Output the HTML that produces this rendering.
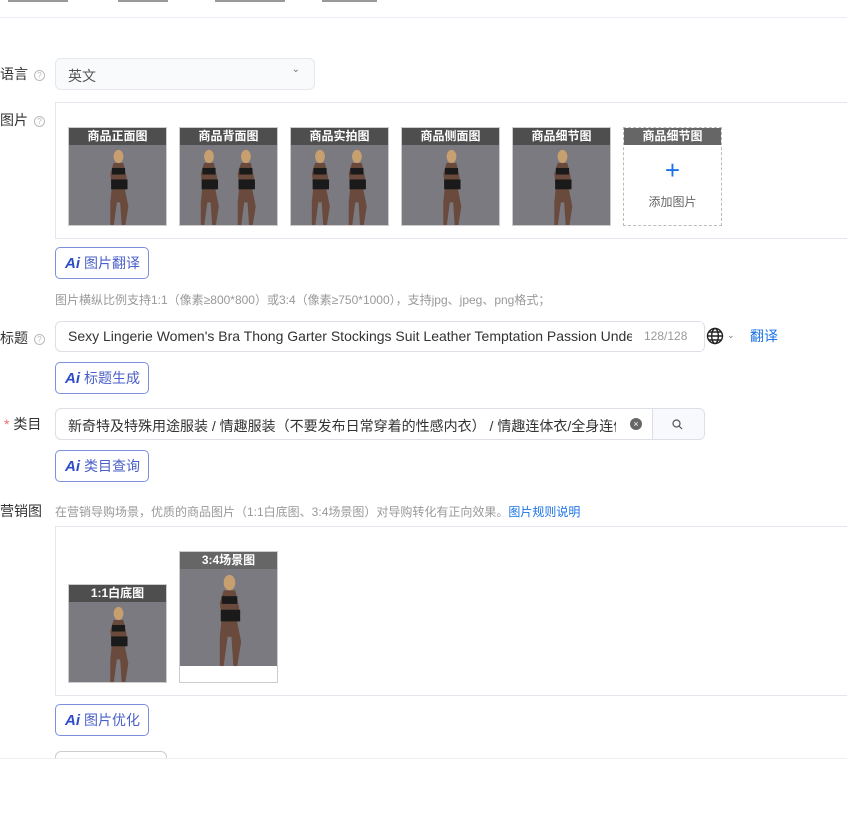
<!DOCTYPE html>
<html><head><meta charset="utf-8">
<style>
*{box-sizing:border-box;margin:0;padding:0}
body{width:847px;height:830px;background:#fff;position:relative;overflow:hidden;font-family:"Liberation Sans","Noto Sans CJK SC",sans-serif;color:#333;font-size:14px}
.a{position:absolute}
.lbl{font-size:14px;color:#333}
.q{display:inline-block;width:11px;height:11px;border:1px solid #bbb;border-radius:50%;font-size:8px;color:#bbb;text-align:center;line-height:9px;vertical-align:1px;margin-left:6px}
.inp{border:1px solid #dcdfe6;border-radius:4px;background:#fff}
.ai{border:1px solid #7d90e0;border-radius:5px;width:94px;height:32px;font-size:14px;color:#4a5fc8;line-height:30px;padding-left:9px}
.ai b{font-style:italic;font-weight:bold;color:#2f4cc8;margin-right:4px;font-size:15px}
.th{position:absolute;width:99px;border:1px solid #ccc;background:#7b7a80;overflow:hidden}
.th .h{height:17px;background:#4e4e4e;color:#fff;font-size:12px;text-align:center;line-height:17px;font-weight:bold}
.hint{font-size:12px;color:#999}
</style></head><body>
<div class="a" style="left:8px;top:0;width:60px;height:2px;background:#999"></div>
<div class="a" style="left:118px;top:0;width:50px;height:2px;background:#999"></div>
<div class="a" style="left:215px;top:0;width:70px;height:2px;background:#999"></div>
<div class="a" style="left:322px;top:0;width:55px;height:2px;background:#999"></div>
<div class="a" style="left:0;top:17px;width:847px;height:1px;background:#ebeef5"></div>

<div class="a lbl" style="left:0;top:64px">语言<span class="q">?</span></div>
<div class="a inp" style="left:55px;top:58px;width:260px;height:32px;background:#f8fafc;border-color:#e4e7ed;border-radius:6px;padding:7px 12px;color:#555">英文<span style="position:absolute;right:14px;top:5px;font-size:10px;color:#777">&#8964;</span></div>

<div class="a lbl" style="left:0;top:110px">图片<span class="q">?</span></div>
<div class="a" style="left:55px;top:102px;width:800px;height:137px;border:1px solid #e4e7ed"></div>

<svg width="0" height="0" style="position:absolute"><defs>
<g id="fig"><ellipse cx="50" cy="14" rx="6" ry="8" fill="#c8a070"/><path d="M44 22 L56 22 L60 40 L58 55 L62 75 L58 100 L54 100 L52 70 L48 70 L44 100 L40 100 L40 70 L42 50 L40 35Z" fill="#6a4a3c"/><rect x="42" y="28" width="16" height="8" fill="#1a1a1a"/><rect x="41" y="42" width="20" height="12" fill="#1a1a1a"/></g>
</defs></svg>

<div class="th" style="left:68px;top:127px;height:99px"><div class="h">商品正面图</div><svg width="99" height="82" viewBox="0 0 100 100"><use href="#fig"/></svg></div>
<div class="th" style="left:179px;top:127px;height:99px"><div class="h">商品背面图</div><svg width="99" height="82" viewBox="0 0 100 100"><use href="#fig" transform="translate(-25,0)"/><use href="#fig" transform="translate(20,0)"/></svg></div>
<div class="th" style="left:290px;top:127px;height:99px"><div class="h">商品实拍图</div><svg width="99" height="82" viewBox="0 0 100 100"><use href="#fig" transform="translate(-25,0)"/><use href="#fig" transform="translate(20,0)"/></svg></div>
<div class="th" style="left:401px;top:127px;height:99px"><div class="h">商品侧面图</div><svg width="99" height="82" viewBox="0 0 100 100"><use href="#fig"/></svg></div>
<div class="th" style="left:512px;top:127px;height:99px"><div class="h">商品细节图</div><svg width="99" height="82" viewBox="0 0 100 100"><use href="#fig"/></svg></div>
<div class="th" style="left:623px;top:127px;height:99px;background:#fff;border:1px dashed #bbb"><div class="h" style="background:#666">商品细节图</div>
<div style="text-align:center;color:#1a73e8;font-size:26px;line-height:26px;margin-top:12px">+</div>
<div style="text-align:center;color:#666;font-size:12px;margin-top:10px">添加图片</div></div>

<div class="a ai" style="left:55px;top:247px"><b>Ai</b>图片翻译</div>
<div class="a hint" style="left:55px;top:291px">图片横纵比例支持1:1（像素≥800*800）或3:4（像素≥750*1000），支持jpg、jpeg、png格式；</div>

<div class="a lbl" style="left:0;top:328px">标题<span class="q">?</span></div>
<div class="a inp" style="left:55px;top:321px;width:650px;height:31px;border-radius:6px;padding:6px 12px;white-space:nowrap;overflow:hidden;color:#333">Sexy Lingerie Women's Bra Thong Garter Stockings Suit Leather Temptation Passion Underw</div>
<div class="a" style="left:632px;top:322px;width:70px;height:29px;background:#fff;color:#999;font-size:12px;line-height:29px;padding-left:12px">128/128</div>
<svg class="a" style="left:706px;top:327px" width="18" height="18" viewBox="0 0 18 18" fill="none" stroke="#222" stroke-width="1.4"><circle cx="9" cy="9" r="7.5"/><ellipse cx="9" cy="9" rx="3.3" ry="7.5"/><path d="M1.5 9h15M3 5h12M3 13h12"/></svg>
<div class="a" style="left:727px;top:330px;font-size:9px;color:#777">&#8964;</div>
<div class="a" style="left:750px;top:326px;color:#1a73e8">翻译</div>

<div class="a ai" style="left:55px;top:362px"><b>Ai</b>标题生成</div>

<div class="a lbl" style="left:4px;top:414px"><span style="color:#f56c6c">*</span> 类目</div>
<div class="a inp" style="left:55px;top:408px;width:650px;height:32px;border-radius:6px;overflow:hidden">
<div style="position:absolute;left:12px;top:7px;width:548px;white-space:nowrap;overflow:hidden">新奇特及特殊用途服装 / 情趣服装（不要发布日常穿着的性感内衣） / 情趣连体衣/全身连体衣</div>
<div style="position:absolute;left:574px;top:9px;width:12px;height:12px;border-radius:50%;background:#666;color:#fff;font-size:9px;line-height:12px;text-align:center">×</div>
<div style="position:absolute;left:596px;top:0;width:54px;height:30px;background:#f7f9fc;border-left:1px solid #dcdfe6"></div>
<svg style="position:absolute;left:616px;top:10px" width="11" height="11" viewBox="0 0 11 11" fill="none" stroke="#555" stroke-width="1.2"><circle cx="4.5" cy="4.5" r="3.5"/><path d="M7 7l3 3"/></svg>
</div>

<div class="a ai" style="left:55px;top:450px"><b>Ai</b>类目查询</div>

<div class="a lbl" style="left:0;top:501px">营销图</div>
<div class="a hint" style="left:55px;top:503px">在营销导购场景，优质的商品图片（1:1白底图、3:4场景图）对导购转化有正向效果。<span style="color:#1a73e8">图片规则说明</span></div>
<div class="a" style="left:55px;top:526px;width:800px;height:170px;border:1px solid #e4e7ed"></div>
<div class="th" style="left:68px;top:584px;height:99px"><div class="h">1:1白底图</div><svg width="99" height="82" viewBox="0 0 100 100"><use href="#fig"/></svg></div>
<div class="th" style="left:179px;top:551px;height:132px;background:#fff"><div class="h" style="background:#666">3:4场景图</div><div style="background:#7b7a80;height:97px"><svg width="99" height="97" viewBox="0 0 100 100"><use href="#fig"/></svg></div></div>

<div class="a ai" style="left:55px;top:704px"><b>Ai</b>图片优化</div>
<div class="a" style="left:55px;top:751px;width:112px;height:20px;border:1px solid #ccc;border-radius:6px"></div>
<div class="a" style="left:0;top:758px;width:847px;height:72px;background:#fff;border-top:1px solid #f0f0f0"></div>
</body></html>
